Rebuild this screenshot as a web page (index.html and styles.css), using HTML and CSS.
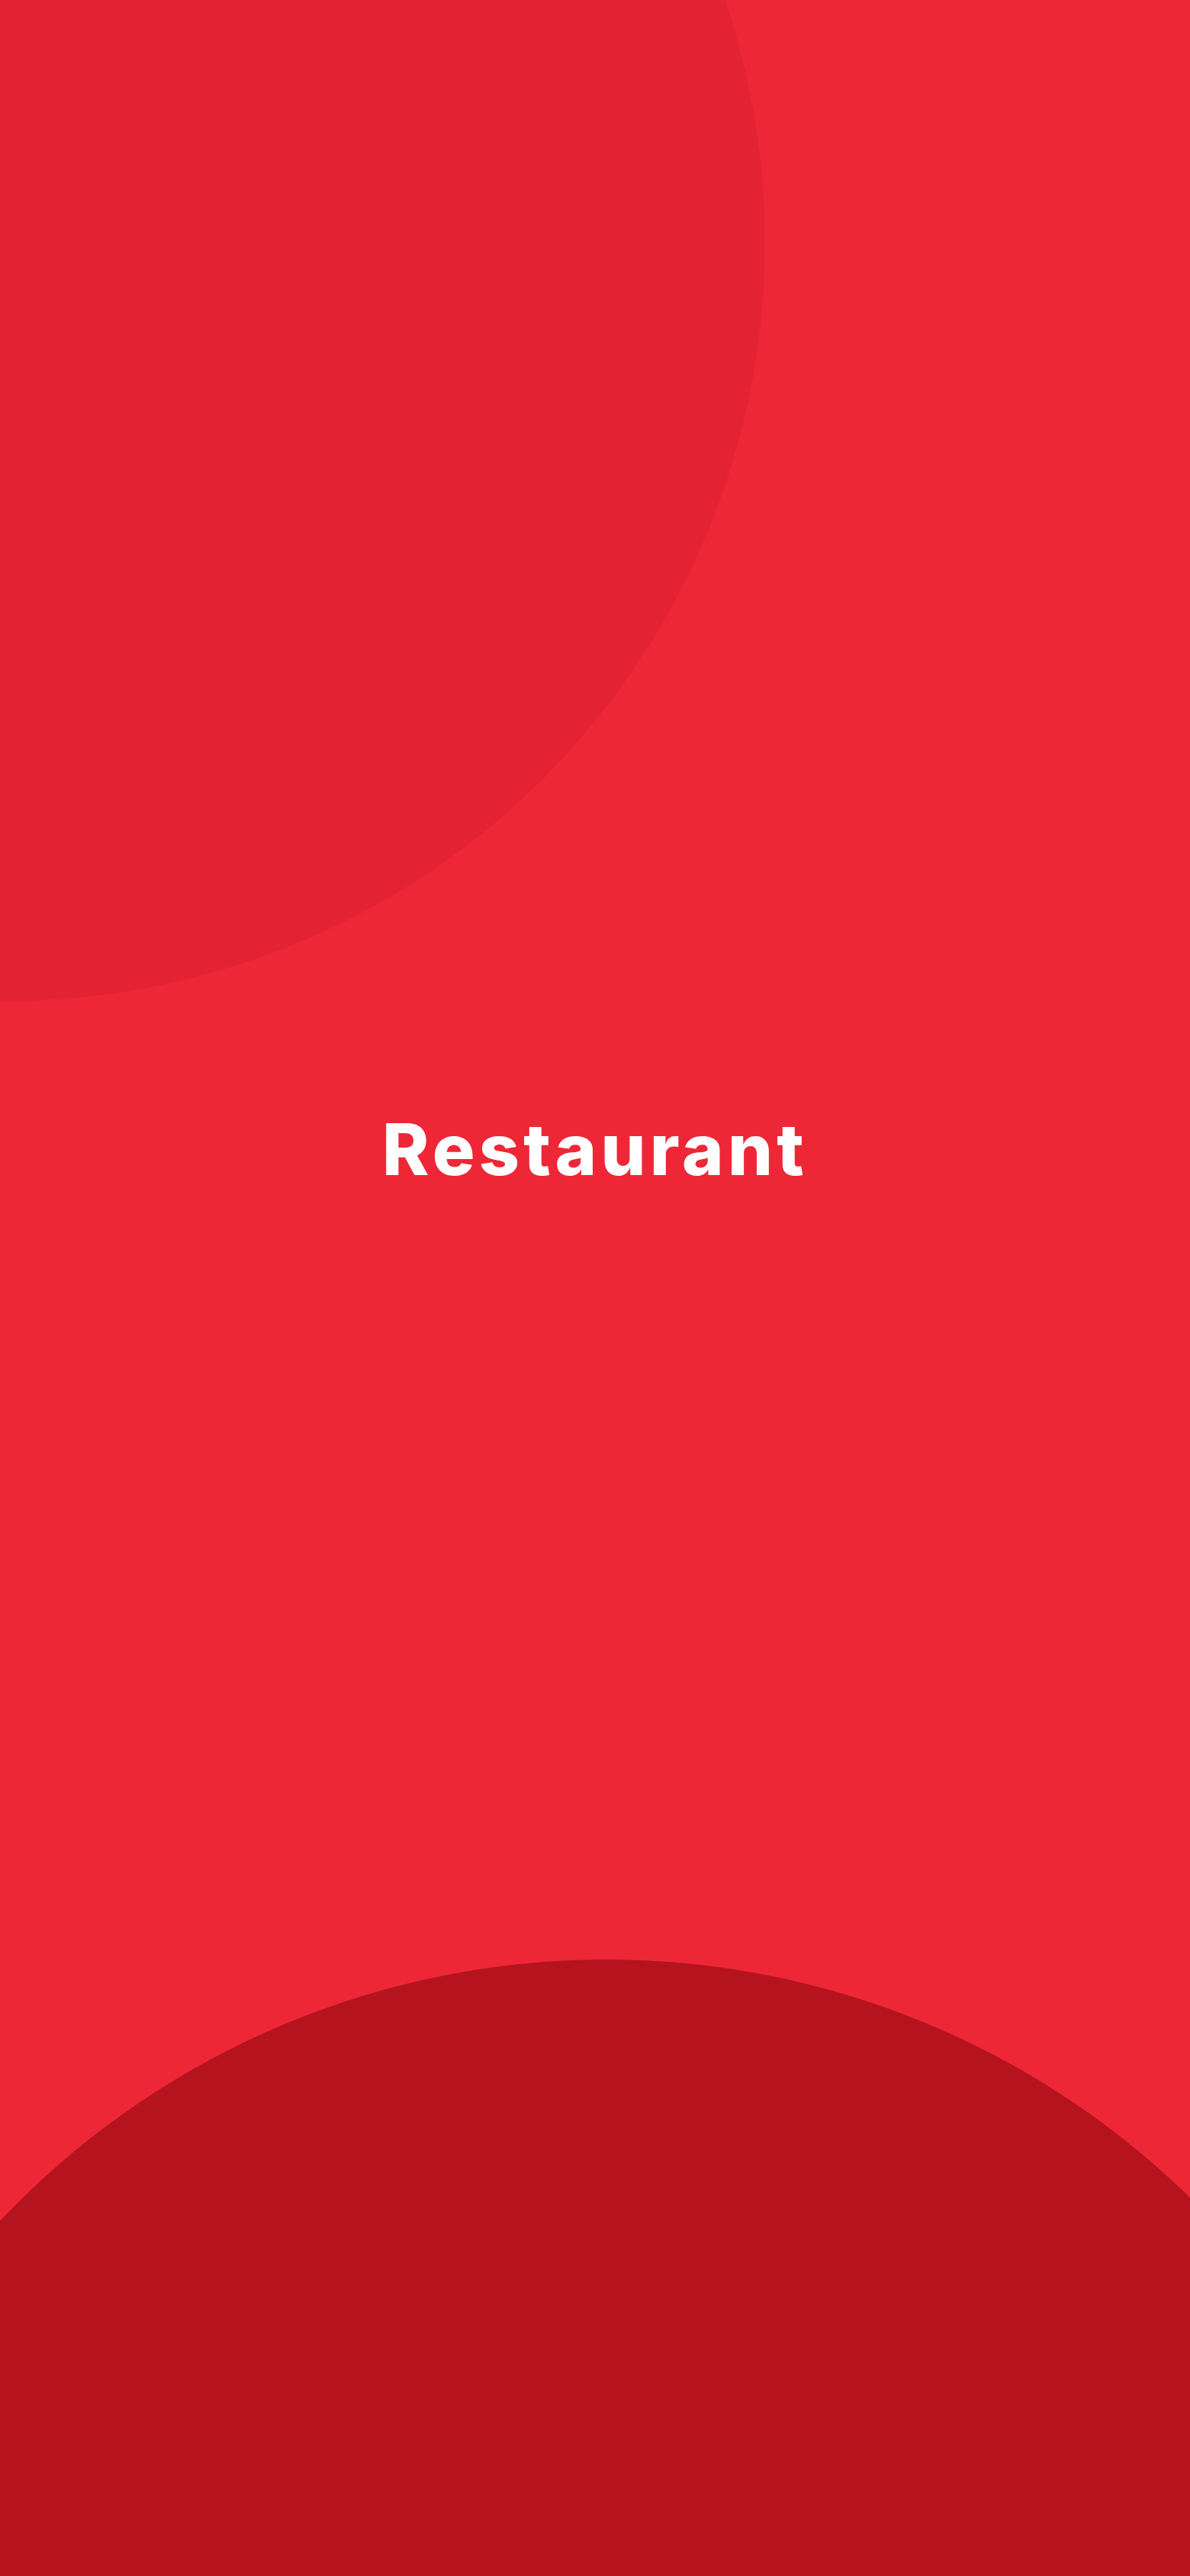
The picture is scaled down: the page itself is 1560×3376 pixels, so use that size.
FILE: index.html
```html
<!DOCTYPE html>
<html lang="en">
<head>
<meta charset="utf-8">
<title>Restaurant</title>
<link rel="stylesheet" href="styles.css">
</head>
<body>
<main class="splash">
  <h1 class="brand">Restaurant</h1>
</main>
</body>
</html>
```
FILE: styles.css
```css
html, body {
  margin: 0;
  padding: 0;
}

body {
  width: 1560px;
  height: 3376px;
  overflow: hidden;
  font-family: Inter, "Open Sans", "Liberation Sans", sans-serif;
}

.splash {
  box-sizing: border-box;
  width: 1560px;
  height: 3376px;
  padding-top: 1460px;
  background:
    radial-gradient(circle 994px at 9px 318px, #e32333 993.4px, rgba(227, 35, 51, 0) 994.4px),
    radial-gradient(circle 1094px at 795px 3662px, #b5141f 1093.4px, rgba(181, 20, 31, 0) 1094.4px),
    #ee2737;
  background-repeat: no-repeat;
}

.brand {
  margin: 0;
  text-align: center;
  color: #ffffff;
  font-size: 93px;
  line-height: 1;
  font-weight: 800;
  letter-spacing: 5.2px;
}
```
